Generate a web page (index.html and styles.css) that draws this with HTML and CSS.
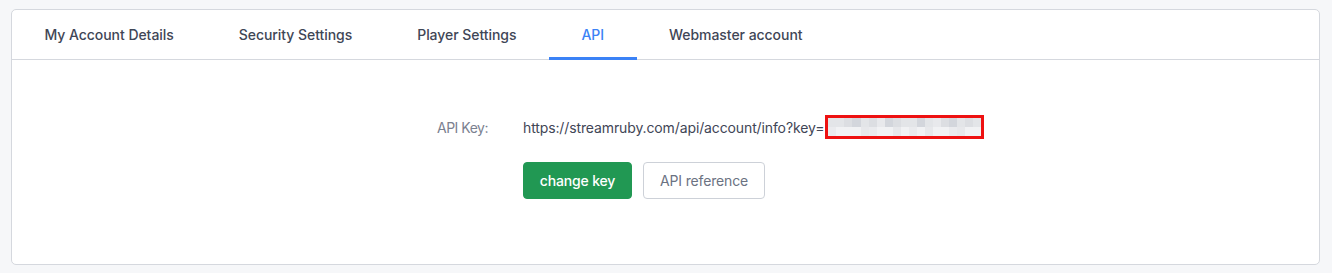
FILE: index.html
```html
<!DOCTYPE html>
<html lang="en">
<head>
<meta charset="utf-8">
<title>API</title>
<link rel="stylesheet" href="styles.css">
</head>
<body>
<div class="card">
  <nav class="tabs">
    <a class="tab">My Account Details</a>
    <a class="tab">Security Settings</a>
    <a class="tab">Player Settings</a>
    <a class="tab active">API</a>
    <a class="tab">Webmaster account</a>
  </nav>
  <div class="panel">
    <div class="form">
      <div class="label">API Key:</div>
      <div class="value">
        <span class="url">https://streamruby.com/api/account/info?key=</span><span class="key"><span class="blur"><i></i><i></i><i></i><i></i><i></i><i></i><i></i><i></i><i></i><i></i><i></i><i></i><i></i><i></i><i></i><i></i><i></i><i></i><i></i><i></i><i></i><i></i><i></i><i></i><i></i><i></i><i></i><i></i><i></i><i></i><i></i><i></i><i></i><i></i><i></i><i></i><i></i><i></i></span></span>
      </div>
      <div></div>
      <div class="actions">
        <button class="btn btn-green">change key</button>
        <button class="btn btn-outline">API reference</button>
      </div>
    </div>
  </div>
</div>
</body>
</html>
```
FILE: styles.css
```css
* { box-sizing: border-box; }
html, body { margin: 0; padding: 0; }
body {
  background: #f6f7f9;
  font-family: "Inter", "Noto Sans", sans-serif;
  font-size: 14px;
  color: #3f4656;
  padding: 9px 12px 8px 11px;
}
.card {
  background: #fff;
  border: 1px solid #d5d8de;
  border-radius: 5px;
  height: 256px;
  display: flex;
  flex-direction: column;
}
.tabs {
  display: flex;
  height: 50px;
  border-bottom: 1px solid #d5d8de;
}
.tab {
  display: flex;
  align-items: center;
  padding: 3px 32.5px 2px;
  font-weight: 500;
  font-size: 14px;
  letter-spacing: -0.05px;
  color: #3f4656;
  border-bottom: 3px solid transparent;
  margin-bottom: -1px;
  white-space: nowrap;
}
.tab.active {
  color: #3b82f6;
  border-bottom-color: #3b82f6;
}
.panel {
  flex: 1;
  padding: 55px 0 0 425px;
}
.form {
  display: grid;
  grid-template-columns: 86px auto;
  row-gap: 23px;
  align-items: center;
}
.label {
  color: #7b8190;
  font-size: 14px;
  letter-spacing: -0.5px;
}
.value {
  display: flex;
  align-items: center;
  height: 24px;
  white-space: nowrap;
}
.url {
  color: #3f4656;
  letter-spacing: -0.12px;
}
.key {
  border: 3px solid #ee1111;
  width: 159px;
  height: 24px;
  background: #eceef0;
  margin-left: 1px;
}
.blur {
  display: grid;
  grid-template-columns: repeat(19, 1fr);
  grid-template-rows: 9px 9px;
  height: 18px;
}
.blur i { background: #e3e5e8; }
.blur i:nth-child(3n) { background: #dcdee2; }
.blur i:nth-child(4n) { background: #d3d6dc; }
.blur i:nth-child(7n) { background: #e8e9ec; }
.blur i:nth-child(n+20) { background: #f1f2f4; }
.blur i:nth-child(n+20):nth-child(4n) { background: #e7e8eb; }
.blur i:nth-child(n+20):nth-child(5n) { background: #eaebee; }
.actions {
  display: flex;
  gap: 11px;
}
.btn {
  font-family: inherit;
  font-size: 14px;
  height: 37px;
  border-radius: 4px;
  padding: 0;
  letter-spacing: -0.15px;
  white-space: nowrap;
  cursor: pointer;
}
.btn-green {
  background: #219853;
  border: 1px solid #219853;
  color: #fff;
  font-weight: 500;
  width: 109px;
}
.btn-outline {
  background: #fff;
  border: 1px solid #cdd1d8;
  color: #6b7282;
  width: 122px;
}
```
